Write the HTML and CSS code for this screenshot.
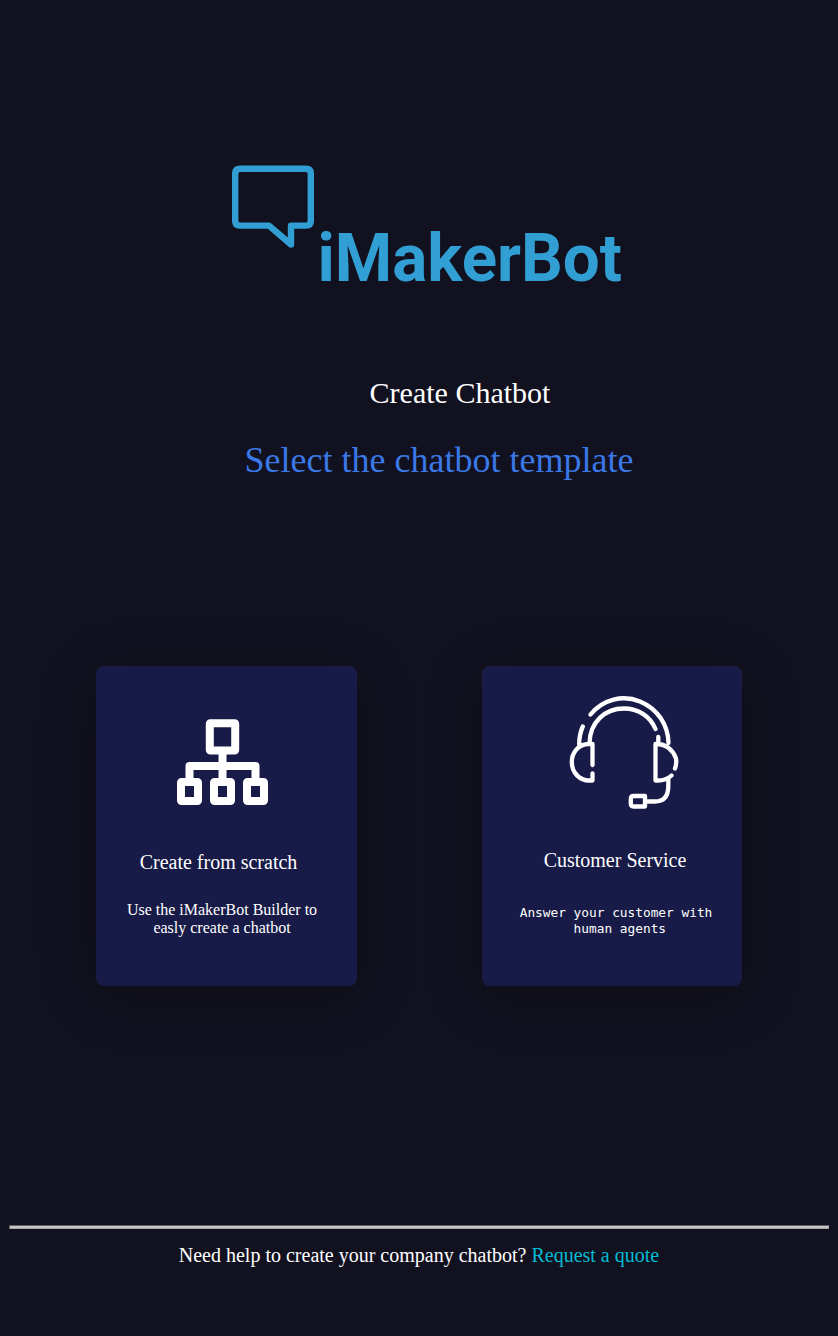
FILE: index.html
```html
<!DOCTYPE html>
<html lang="en">
<head>
<meta charset="utf-8">
<title>iMakerBot</title>
<link rel="stylesheet" href="styles.css">
</head>
<body>
<header class="header">
  <svg class="logo" width="400" height="150" viewBox="228 160 400 150" role="img" aria-label="iMakerBot">
    <path class="logo-bubble" d="M240 168.700H306Q310.800 168.700 310.800 173.500V221Q310.800 225.600 306 225.600H291V244.500L269 225.600H240Q235.200 225.600 235.200 221V173.500Q235.200 168.700 240 168.700Z"/>
    <text class="logo-text" x="317.500" y="281" textLength="304.500" lengthAdjust="spacingAndGlyphs">iMakerBot</text>
  </svg>
  <h1 class="title">Create Chatbot</h1>
  <h2 class="subtitle">Select the chatbot template</h2>
</header>
<main class="cards">
  <section class="card card-scratch">
    <svg class="icon-tree" width="92" height="87" viewBox="176 719 92 87">
      <g class="tree-lines">
        <rect x="209.800" y="723.300" width="25.400" height="27.200" rx="0.500"/>
        <rect x="181" y="782" width="17" height="19" rx="0.500"/>
        <rect x="214" y="782" width="17" height="19" rx="0.500"/>
        <rect x="247" y="782" width="17" height="19" rx="0.500"/>
        <path d="M222.500 751V781M189.500 781V766H255.500V781"/>
      </g>
    </svg>
    <h3 class="card-title">Create from scratch</h3>
    <p class="card-text">Use the iMakerBot Builder to<br>easly create a chatbot</p>
  </section>
  <section class="card card-service">
    <svg class="icon-headset" width="112" height="116" viewBox="568 695 112 116">
      <path class="headset-lines" d="M590.500 714.500C603 699 623 694.500 640 701.500C658 709 668 725 668.500 743M589.500 743C590 722 605 708.500 624 708.500C638 708.500 650 716 655.500 729M582.800 726.500Q579 735 579.200 745M658.300 737V743M592.500 765V744H589C578 744 571.800 753 571.800 762C571.800 773 580 780.500 589 780.500H592.500V773.500M675 768.500Q677 763 675.800 758C673 750 666 744 656.500 744H655.500V780.500H658Q666 780.500 671.500 775.500M668.300 779V786Q668.300 801.500 655 801.500H646M645 796H633.500Q630.800 796 630.800 799V803.500Q630.800 806.500 633.500 806.500H645Z"/>
    </svg>
    <h3 class="card-title">Customer Service</h3>
    <p class="card-text card-text-mono">Answer your customer with<br>&nbsp;human agents</p>
  </section>
</main>
<footer class="footer">
  <hr class="rule">
  <p>Need help to create your company chatbot? <a class="quote" href="#">Request a quote</a></p>
</footer>
</body>
</html>
```

FILE: styles.css
```css
* { box-sizing: border-box; }
body {
  margin: 0;
  min-height: 1336px;
  background: #12111f;
  color: #fff;
  font-family: "Liberation Serif", "Times New Roman", serif;
}
h1, h2, h3, p { margin: 0; font-weight: 400; }
.header {
  height: 666px;
  padding-top: 160px;
  display: flex;
  flex-direction: column;
  align-items: center;
}
.logo { display: block; margin-left: 18px; overflow: visible; }
.logo-bubble { fill: none; stroke: #319fd3; stroke-width: 6.4; stroke-linejoin: round; }
.logo-text { fill: #319fd3; font: 700 66px Roboto, sans-serif; }
.title { margin: 66px 0 0 82px; font-size: 30px; line-height: 34px; }
.subtitle { margin: 29px 0 0 40px; font-size: 36px; line-height: 42px; color: #3b78e7; }
.cards {
  display: grid;
  grid-template-columns: 261px 260px;
  justify-content: center;
  column-gap: 125px;
  height: 559px;
}
.card {
  height: 319.5px;
  border-radius: 8px;
  background: #181b47;
  box-shadow: 0 10px 60px rgba(0, 0, 0, .2);
  text-align: center;
}
.card svg { display: block; }
.icon-tree { margin: 53px 0 0 80px; }
.tree-lines { fill: none; stroke: #fff; stroke-width: 8; stroke-linejoin: round; }
.icon-headset { margin: 29px 0 0 86px; }
.headset-lines { fill: none; stroke: #fff; stroke-width: 4.3; stroke-linecap: round; stroke-linejoin: round; }
.card-title { font-size: 20px; line-height: 23px; }
.card-text { font-size: 16px; line-height: 18px; }
.card-scratch .card-title { margin: 45px 16px 0 0; }
.card-scratch .card-text { margin: 27px 9px 0 0; }
.card-service .card-title { margin: 38px 0 0 6px; }
.card-service .card-text-mono {
  margin: 33px 0 0 8px;
  font: 12.8px/16px "DejaVu Sans Mono", monospace;
}
.footer {
  padding: 0 9px;
  text-align: center;
  font-size: 20px;
  line-height: 23px;
}
.rule {
  height: 4px;
  margin: 0 0 15px;
  border: 1px solid;
  border-color: #5e5d64 #a3a3a3 #a3a3a3 #5e5d64;
  background: #c9c5c3;
}
.quote { color: #00bcd4; text-decoration: none; }
```
